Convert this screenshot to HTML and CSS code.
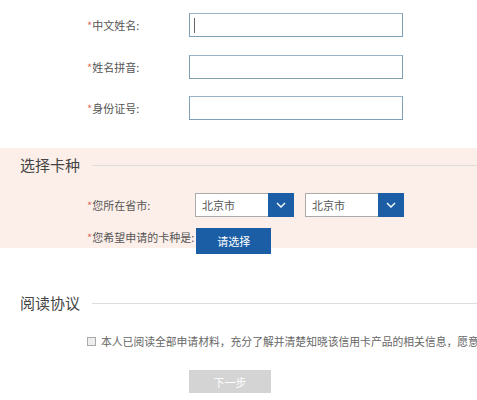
FILE: index.html
```html
<!DOCTYPE html>
<html lang="zh-CN">
<head>
<meta charset="utf-8">
<title>申请信用卡</title>
<link rel="stylesheet" href="styles.css">
</head>
<body>
<div class="page">
  <section class="basic">
    <div class="row">
      <label class="label"><span class="req">*</span>中文姓名:</label>
      <div class="input focused"><span class="caret"></span></div>
    </div>
    <div class="row">
      <label class="label"><span class="req">*</span>姓名拼音:</label>
      <div class="input"></div>
    </div>
    <div class="row">
      <label class="label"><span class="req">*</span>身份证号:</label>
      <div class="input"></div>
    </div>
  </section>

  <section class="card">
    <div class="heading">
      <h2 class="title">选择卡种</h2>
      <div class="rule"></div>
    </div>
    <div class="crow">
      <span class="label"><span class="req">*</span>您所在省市:</span>
      <div class="select">
        <span class="sel-text">北京市</span>
        <span class="sel-arrow"><svg width="10" height="6" viewBox="0 0 10 6"><path d="M1 1 L5 5 L9 1" fill="none" stroke="#fff" stroke-width="1.4"/></svg></span>
      </div>
      <div class="select">
        <span class="sel-text">北京市</span>
        <span class="sel-arrow"><svg width="10" height="6" viewBox="0 0 10 6"><path d="M1 1 L5 5 L9 1" fill="none" stroke="#fff" stroke-width="1.4"/></svg></span>
      </div>
    </div>
    <div class="crow crow2">
      <span class="label lab2"><span class="req">*</span>您希望申请的卡种是:</span>
      <button class="pick">请选择</button>
    </div>
  </section>

  <section class="agree">
    <div class="heading">
      <h2 class="title">阅读协议</h2>
      <div class="rule"></div>
    </div>
    <div class="check-row">
      <span class="box"></span>
      <span class="agree-text">本人已阅读全部申请材料，充分了解并清楚知晓该信用卡产品的相关信息，愿意遵守领用合约的各项规则</span>
    </div>
    <div class="next-row">
      <button class="next">下一步</button>
    </div>
  </section>
</div>
</body>
</html>
```

FILE: styles.css
```css
* { box-sizing: border-box; }
html, body { margin: 0; padding: 0; background: #fff; }
body {
  font-family: "Noto Sans CJK SC", "Liberation Sans", sans-serif;
  font-size: 12px;
  color: #555;
  overflow: hidden;
}
.page { width: 477px; height: 400px; overflow: hidden; }

.basic {
  padding: 13px 0 0 87px;
  height: 148px;
  display: flex;
  flex-direction: column;
  gap: 17.5px;
}
.row { display: flex; align-items: center; height: 24px; }
.label { width: 102px; line-height: 14px; color: #555; white-space: nowrap; font-size: 11px; flex: none; }
.req { color: #e0705a; }
.input {
  width: 214px;
  height: 24px;
  border: 1px solid #7f9fb6;
  border-top-color: #9ab3c6;
  background: #fff;
  position: relative;
}
.caret {
  position: absolute;
  left: 4px;
  top: 4px;
  width: 1px;
  height: 15px;
  background: #666;
}

.card {
  background: #fcefea;
  height: 100px;
  padding: 7px 0 0 20px;
}
.heading { display: flex; align-items: center; height: 20px; }
.title {
  margin: 0;
  font-size: 15px;
  font-weight: normal;
  color: #444;
  line-height: 20px;
  white-space: nowrap;
}
.rule { flex: 1; height: 1px; background: #ddd; margin-left: 12px; }

.crow {
  display: flex;
  align-items: center;
  margin: 18px 0 0 67px;
  height: 24px;
}
.select {
  display: flex;
  width: 99px;
  height: 24px;
  margin-right: 11px;
}
.select:first-of-type { margin-left: 6px; }
.sel-text {
  flex: 1;
  border: 1px solid #aaa;
  border-right: none;
  background: #fff;
  padding-left: 6px;
  line-height: 22px;
  color: #555;
  font-size: 11px;
}
.sel-arrow {
  width: 26px;
  background: #1b5ea6;
  display: flex;
  align-items: center;
  justify-content: center;
}
.crow2 { margin-top: 11px; align-items: flex-start; height: 26px; }
.lab2 { margin-top: 2px; width: auto; margin-right: 2px; }
.pick {
  width: 75px;
  height: 26px;
  border: none;
  background: #1b5ea6;
  color: #fff;
  font-family: inherit;
  font-size: 11px;
  padding: 0;
  flex: none;
}

.agree { padding: 45px 0 0 20px; }
.check-row {
  display: flex;
  align-items: center;
  margin: 20px 0 0 67px;
  white-space: nowrap;
  height: 16px;
}
.box {
  width: 9px;
  height: 9px;
  border: 1px solid #aaa;
  background: #eee;
  margin-right: 5px;
  flex: none;
}
.agree-text { font-size: 10.8px; color: #666; }
.next-row { margin: 21px 0 0 169px; }
.next {
  width: 82px;
  height: 23px;
  border: none;
  background: #d4d4d4;
  color: #fff;
  font-family: inherit;
  font-size: 11px;
  padding: 0;
}
```
